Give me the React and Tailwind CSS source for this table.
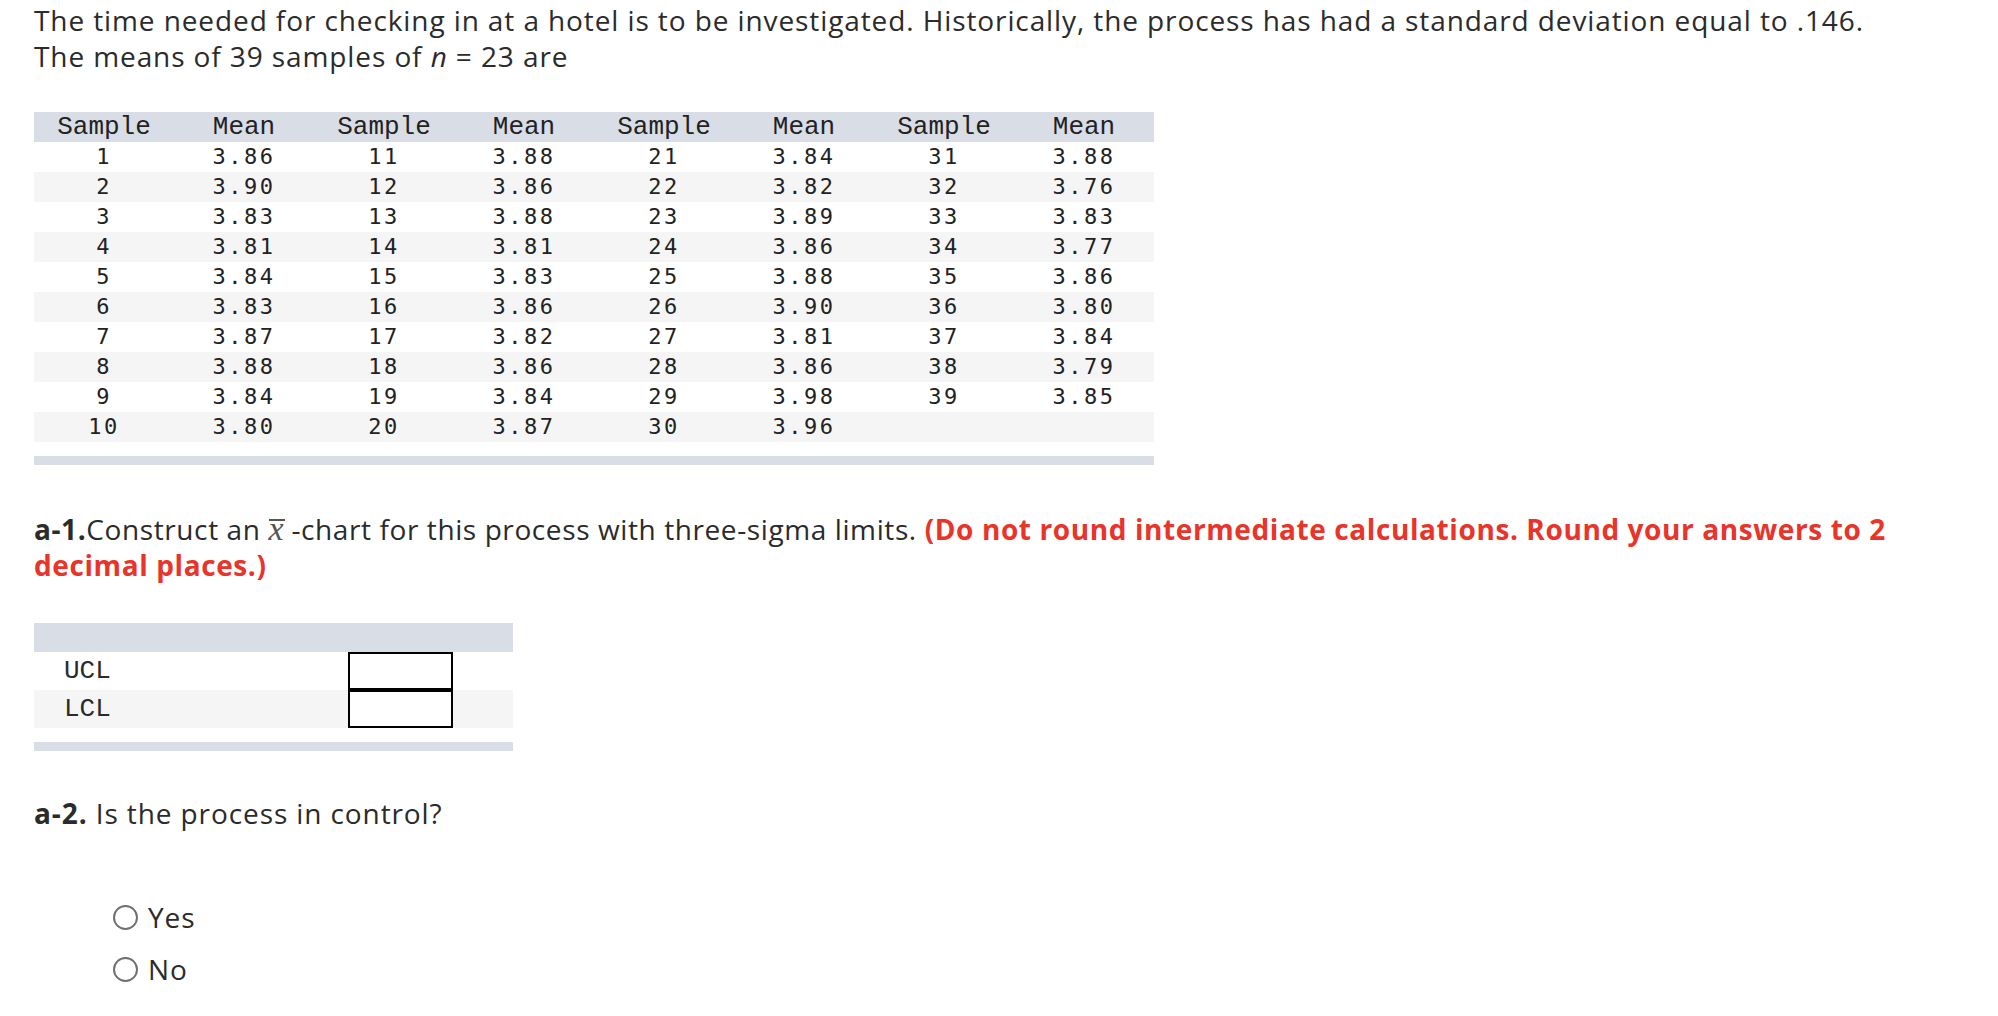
import React from "react";

const rows = [
  ["1", "3.86", "11", "3.88", "21", "3.84", "31", "3.88"],
  ["2", "3.90", "12", "3.86", "22", "3.82", "32", "3.76"],
  ["3", "3.83", "13", "3.88", "23", "3.89", "33", "3.83"],
  ["4", "3.81", "14", "3.81", "24", "3.86", "34", "3.77"],
  ["5", "3.84", "15", "3.83", "25", "3.88", "35", "3.86"],
  ["6", "3.83", "16", "3.86", "26", "3.90", "36", "3.80"],
  ["7", "3.87", "17", "3.82", "27", "3.81", "37", "3.84"],
  ["8", "3.88", "18", "3.86", "28", "3.86", "38", "3.79"],
  ["9", "3.84", "19", "3.84", "29", "3.98", "39", "3.85"],
  ["10", "3.80", "20", "3.87", "30", "3.96", "", ""],
];

const headers = ["Sample", "Mean", "Sample", "Mean", "Sample", "Mean", "Sample", "Mean"];

function Radio({ label }) {
  return (
    <label className="flex items-center gap-[10px] h-[52px]">
      <span className="w-[25px] h-[25px] rounded-full border-2 border-[#707070] bg-white"></span>
      <span>{label}</span>
    </label>
  );
}

export default function App() {
  return (
    <div className="bg-white min-h-[1016px] w-[1998px] text-[#2b2b2b] font-['Open_Sans',sans-serif]">
      <div className="pl-[34px] pt-[2px] text-[28px] leading-[36px] tracking-[0.9px]">
        <p className="whitespace-nowrap">
          The time needed for checking in at a hotel is to be investigated. Historically, the process has had a standard deviation equal to .146.
          <br />
          The means of 39 samples of <i>n</i> = 23 are
        </p>

        <div className="mt-[38px] w-[1120px] tracking-normal">
          <div className="grid grid-cols-8 bg-[#d9dde6] h-[30px] items-center font-['Liberation_Mono','Courier_New',monospace] text-[26px] leading-[30px] text-[#222]">
            {headers.map((h, i) => (
              <div key={i} className="text-center">{h}</div>
            ))}
          </div>
          {rows.map((r, i) => (
            <div
              key={i}
              className={`grid grid-cols-8 h-[30px] items-center font-['DejaVu_Sans_Mono',monospace] text-[22px] leading-[30px] tracking-[2.5px] text-[#222] ${i % 2 === 1 ? "bg-[#f5f5f5]" : "bg-white"}`}
            >
              {r.map((c, j) => (
                <div key={j} className="text-center">{c}</div>
              ))}
            </div>
          ))}
          <div className="mt-[14px] h-[9px] bg-[#d9dde6]"></div>
        </div>

        <p className="mt-[46px] whitespace-nowrap tracking-[0.6px]">
          <b>a-1.</b>Construct an{" "}
          <span className="relative inline-block font-['Liberation_Serif',serif] italic text-[34px] text-[#555] tracking-normal">
            x
            <span className="absolute left-[1px] right-[-1px] top-[8px] h-[2px] bg-[#555]"></span>
          </span>{" "}
          -chart for this process with three-sigma limits.{" "}
          <b className="text-[#e8342a]">(Do not round intermediate calculations. Round your answers to 2</b>
          <br />
          <b className="text-[#e8342a]">decimal places.)</b>
        </p>

        <div className="mt-[40px] w-[479px] tracking-normal">
          <div className="h-[29px] bg-[#d9dde6]"></div>
          <div className="flex items-center h-[38px] bg-white">
            <div className="w-[314px] pl-[30px] font-['Liberation_Mono','Courier_New',monospace] text-[26px]">UCL</div>
            <div className="w-[105px] h-[38px] border-2 border-black bg-white"></div>
          </div>
          <div className="flex items-center h-[38px] bg-[#f5f5f5]">
            <div className="w-[314px] pl-[30px] font-['Liberation_Mono','Courier_New',monospace] text-[26px]">LCL</div>
            <div className="w-[105px] h-[38px] border-2 border-black bg-white"></div>
          </div>
          <div className="mt-[14px] h-[9px] bg-[#d9dde6]"></div>
        </div>

        <p className="mt-[44px]">
          <b>a-2.</b> Is the process in control?
        </p>

        <div className="mt-[60px] pl-[79px] flex flex-col">
          <Radio label="Yes" />
          <Radio label="No" />
        </div>
      </div>
    </div>
  );
}
